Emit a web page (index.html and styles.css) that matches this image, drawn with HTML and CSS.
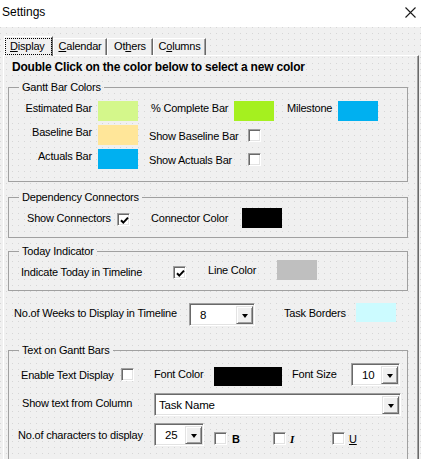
FILE: index.html
```html
<!DOCTYPE html>
<html>
<head>
<meta charset="utf-8">
<title>Settings</title>
<link rel="stylesheet" href="styles.css">
</head>
<body>
<div class="window">
  <div class="titlebar">
    <span class="title">Settings</span>
    <svg class="close" width="11" height="11" viewBox="0 0 11 11"><path d="M0.5 0.5L10.5 10.5M10.5 0.5L0.5 10.5" stroke="#1a1a1a" stroke-width="1.1" fill="none"/></svg>
  </div>
  <div class="dialog">
    <div class="tabs">
      <div class="tab active t-display"><span class="focus"><u>D</u>isplay</span></div>
      <div class="tab t-calendar"><u>C</u>alendar</div>
      <div class="tab t-others">Ot<u>h</u>ers</div>
      <div class="tab t-columns">C<u>o</u>lumns</div>
    </div>
    <div class="pane">
      <div class="heading">Double Click on the color below to select a new color</div>

      <fieldset class="frame f-gantt">
        <legend>Gantt Bar Colors</legend>
        <div class="row">
          <span class="lab lab-r">Estimated Bar</span>
          <span class="sw sw-a c-est"></span>
          <span class="lab lab-pct">% Complete Bar</span>
          <span class="sw c-pct"></span>
          <span class="lab lab-mile">Milestone</span>
          <span class="sw c-blue"></span>
        </div>
        <div class="row">
          <span class="lab lab-r">Baseline Bar</span>
          <span class="sw sw-a c-base"></span>
          <span class="lab lab-show">Show Baseline Bar</span>
          <span class="chk chk-show"></span>
        </div>
        <div class="row">
          <span class="lab lab-r">Actuals Bar</span>
          <span class="sw sw-a c-blue"></span>
          <span class="lab lab-show">Show Actuals Bar</span>
          <span class="chk chk-show"></span>
        </div>
      </fieldset>

      <fieldset class="frame f-dep">
        <legend>Dependency Connectors</legend>
        <div class="row">
          <span class="lab lab-conn">Show Connectors</span>
          <span class="chk chk-conn checked"><svg width="9" height="9" viewBox="0 0 9 9"><path d="M1 4.2L3.3 6.6L8 1.6" stroke="#000" stroke-width="2" fill="none"/></svg></span>
          <span class="lab lab-ccol">Connector Color</span>
          <span class="sw sw-conn c-black"></span>
        </div>
      </fieldset>

      <fieldset class="frame f-today">
        <legend>Today Indicator</legend>
        <div class="row">
          <span class="lab lab-today">Indicate Today in Timeline</span>
          <span class="chk chk-today checked"><svg width="9" height="9" viewBox="0 0 9 9"><path d="M1 4.2L3.3 6.6L8 1.6" stroke="#000" stroke-width="2" fill="none"/></svg></span>
          <span class="lab lab-line">Line Color</span>
          <span class="sw sw-line c-grey"></span>
        </div>
      </fieldset>

      <div class="row weeks">
        <span class="lab lab-weeks">No.of Weeks to Display in Timeline</span>
        <div class="combo combo-weeks"><span class="val">8</span><span class="btn"><span class="tri"></span></span></div>
        <span class="lab lab-borders">Task Borders</span>
        <span class="sw sw-borders c-cyan"></span>
      </div>

      <fieldset class="frame f-text">
        <legend>Text on Gantt Bars</legend>
        <div class="row r-t1">
          <span class="lab lab-enable">Enable Text Display</span>
          <span class="chk chk-enable"></span>
          <span class="lab lab-fcol">Font Color</span>
          <span class="sw sw-font c-black"></span>
          <span class="lab lab-fsize">Font Size</span>
          <div class="combo combo-size"><span class="val">10</span><span class="btn"><span class="tri"></span></span></div>
        </div>
        <div class="row r-t2">
          <span class="lab lab-col">Show text from Column</span>
          <div class="combo combo-col"><span class="val">Task Name</span><span class="btn"><span class="tri"></span></span></div>
        </div>
        <div class="row r-t3">
          <span class="lab lab-chars">No.of characters to display</span>
          <div class="combo combo-chars"><span class="val">25</span><span class="btn"><span class="tri"></span></span></div>
          <span class="chk chk-b"></span>
          <span class="lab fmt fmt-b">B</span>
          <span class="chk chk-fmt"></span>
          <span class="lab fmt fmt-i">I</span>
          <span class="chk chk-fmt"></span>
          <span class="lab fmt fmt-u">U</span>
        </div>
      </fieldset>
    </div>
  </div>
</div>
</body>
</html>
```
FILE: styles.css
```css
* { box-sizing: border-box; }

body {
  margin: 0;
  font-family: "Liberation Sans", Arial, sans-serif;
  font-size: 11px;
  letter-spacing: -0.2px;
  color: #000;
  background: #fff;
}

.window {
  width: 421px;
  height: 459px;
  overflow: hidden;
  background: #fff;
}

.titlebar {
  height: 27px;
  display: flex;
  align-items: center;
  justify-content: space-between;
  padding: 0 5px 3px 2px;
  background: #fff;
}

.title {
  font-size: 12px;
  letter-spacing: 0;
  color: #000;
}

.close { display: block; margin-top: 1px; }

.dialog {
  height: 432px;
  background-color: #f0f0f0;
  background-image: url("data:image/svg+xml,%3Csvg xmlns='http://www.w3.org/2000/svg' width='6' height='6'%3E%3Crect width='1' height='1' fill='%23d6d6d6'/%3E%3C/svg%3E");
}

/* tabs */
.tabs {
  display: flex;
  align-items: flex-end;
  height: 28px;
  padding: 9px 0 0 4px;
}

.tab {
  height: 17px;
  line-height: 15px;
  border-top: 1px solid #fff;
  border-left: 1px solid #fff;
  border-right: 1px solid #696969;
  box-shadow: inset -1px 0 0 #a0a0a0;
  background: #f0f0f0;
  text-align: center;
  white-space: nowrap;
}

.tab u { text-decoration: underline; text-underline-offset: 1px; }

.t-display { width: 49px; }
.t-calendar { width: 54px; }
.t-others { width: 46px; }
.t-columns { width: 53px; }

.tab.active {
  height: 20px;
  margin-bottom: -1px;
  position: relative;
  z-index: 1;
  padding: 1px 0 0 0;
  text-align: left;
}

.focus {
  display: block;
  width: 47px;
  height: 17px;
  line-height: 14px;
  border: 1px dotted #000;
  padding-left: 4px;
}

/* pane */
.pane {
  margin-left: 3px;
  width: 416px;
  height: 405px;
  border-top: 1px solid #fff;
  border-left: 1px solid #fff;
  border-right: 1px solid #696969;
  box-shadow: inset -1px 0 0 #a0a0a0;
}

.heading {
  margin-top: 4px;
  padding-left: 8px;
  font-weight: bold;
  font-size: 12px;
  line-height: 14px;
  letter-spacing: -0.2px;
}

/* frames */
.frame {
  margin: 0 0 0 4px;
  width: 400px;
  min-width: 0;
  padding: 0;
  border: 1px solid #a0a0a0;
}

.frame legend {
  margin-left: 10px;
  padding: 0 3px;
  line-height: 14px;
}

.f-gantt { margin-top: 6px; padding: 5px 0 10px 0; }
.f-dep { margin-top: 8px; padding: 0 0 9px 0; }
.f-today { margin-top: 6px; padding: 0 0 10px 0; }
.f-text { margin-top: 17px; padding: 0 0 20px 0; }

.row {
  display: flex;
  align-items: flex-start;
}

.lab {
  line-height: 14px;
  white-space: nowrap;
}

.sw {
  display: block;
  width: 40px;
  height: 20px;
  flex: none;
}

.chk {
  display: flex;
  align-items: center;
  justify-content: center;
  width: 13px;
  height: 13px;
  flex: none;
  background: #fff;
  border-top: 1px solid #a0a0a0;
  border-left: 1px solid #a0a0a0;
  border-right: 1px solid #fff;
  border-bottom: 1px solid #fff;
  box-shadow: inset 1px 1px 0 #696969, inset -1px -1px 0 #e3e3e3;
}

.chk svg { display: block; margin: 1px 0 0 1px; }

/* colours */
.c-est { background: #d4f78b; }
.c-pct { background: #a5f01f; }
.c-blue { background: #00b0f0; }
.c-base { background: #ffe699; }
.c-black { background: #000; }
.c-grey { background: #bfbfbf; }
.c-cyan { background: #ccfbff; }

/* gantt frame rows */
.f-gantt .row { height: 24px; }
.f-gantt .lab { padding-top: 2px; }
.f-gantt .sw { margin-top: 2px; }
.lab-r { width: 83px; text-align: right; }
.sw-a { margin-left: 6px; }
.lab-pct { margin-left: 13px; width: 83px; }
.lab-mile { margin-left: 13px; width: 51px; }
.f-gantt .lab-show { margin-left: 11px; width: 99px; padding-top: 6px; }
.chk-show { margin-top: 6px; }

/* dependency */
.lab-conn { margin-left: 18px; width: 90px; padding-top: 7px; }
.chk-conn { margin-top: 9px; }
.lab-ccol { margin-left: 21px; width: 91px; padding-top: 7px; }
.sw-conn { margin-top: 4px; }

/* today */
.lab-today { margin-left: 12px; width: 152px; padding-top: 7px; }
.chk-today { margin-top: 8px; }
.lab-line { margin-left: 22px; width: 69px; padding-top: 5px; }
.sw-line { margin-top: 2px; }

/* weeks */
.weeks { margin-top: 12px; }
.lab-weeks { margin-left: 10px; width: 175px; padding-top: 3px; }
.lab-borders { margin-left: 29px; width: 72px; padding-top: 3px; }
.sw-borders { height: 19px; }

/* combo */
.combo {
  display: flex;
  flex: none;
  height: 23px;
  background: #fff;
  border-top: 1px solid #a0a0a0;
  border-left: 1px solid #a0a0a0;
  border-right: 1px solid #fff;
  border-bottom: 1px solid #fff;
  box-shadow: inset 1px 1px 0 #696969, inset -1px -1px 0 #e3e3e3;
  padding: 2px 1px 1px 2px;
}

.combo .val {
  flex: 1;
  line-height: 18px;
  padding-left: 8px;
  font-size: 11.5px;
}

.combo .btn {
  width: 17px;
  flex: none;
  display: flex;
  align-items: center;
  justify-content: center;
  background: #f0f0f0;
  border-top: 1px solid #e3e3e3;
  border-left: 1px solid #e3e3e3;
  border-right: 1px solid #696969;
  border-bottom: 1px solid #696969;
  box-shadow: inset 1px 1px 0 #fff, inset -1px -1px 0 #a0a0a0;
}

.tri {
  width: 0;
  height: 0;
  border-left: 3.5px solid transparent;
  border-right: 3.5px solid transparent;
  border-top: 4px solid #000;
  margin-top: 2px;
}

.combo-weeks { width: 66px; }
.combo-size { width: 49px; margin-top: 6px; }
.combo-col { width: 247px; margin-top: 7px; }
.combo-col .val { padding-left: 2px; }
.combo-chars { width: 50px; margin-top: 7px; }

/* text frame rows */
.r-t1 { height: 29px; }
.lab-enable { margin-left: 12px; width: 100px; padding-top: 11px; }
.chk-enable { margin-top: 11px; }
.lab-fcol { margin-left: 20px; width: 60px; padding-top: 10px; }
.sw-font { width: 68px; height: 19px; margin-top: 10px; }
.lab-fsize { margin-left: 10px; width: 59px; padding-top: 10px; }

.r-t2 { height: 30px; }
.lab-col { margin-left: 13px; width: 132px; padding-top: 10px; }

.lab-chars { margin-left: 9px; width: 136px; padding-top: 12px; }
.chk-b { margin-left: 10px; margin-top: 16px; }
.chk-fmt { margin-top: 16px; }
.fmt { padding-top: 16px; }
.fmt-b { margin-left: 5px; width: 41px; font-weight: bold; }
.fmt-i { margin-left: 4px; width: 42px; font-style: italic; font-weight: bold; font-family: "Liberation Serif", serif; }
.fmt-u { margin-left: 4px; text-decoration: underline; }
```
